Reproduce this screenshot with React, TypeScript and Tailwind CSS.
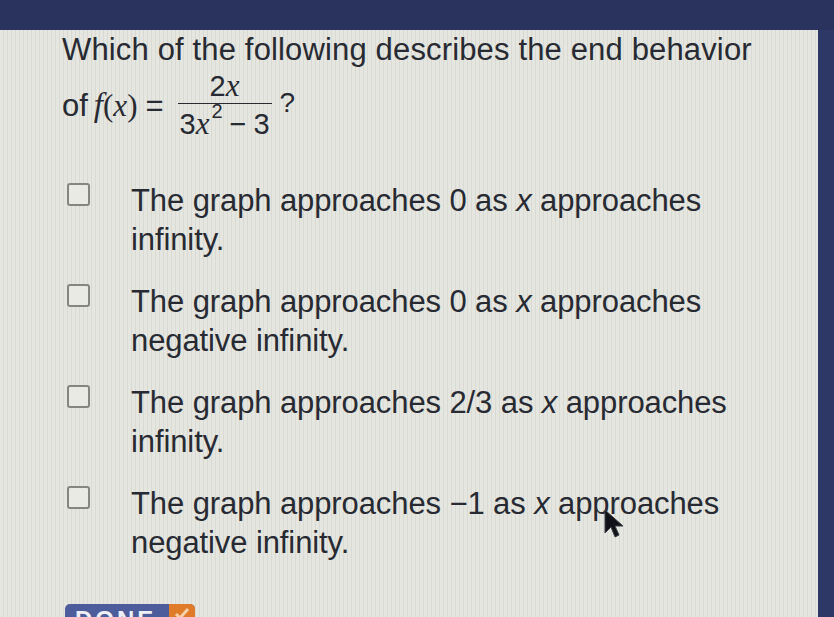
import React from 'react'

const options = [
  ['The graph approaches 0 as ', 'x', ' approaches', 'infinity.'],
  ['The graph approaches 0 as ', 'x', ' approaches', 'negative infinity.'],
  ['The graph approaches 2/3 as ', 'x', ' approaches', 'infinity.'],
  ['The graph approaches \u22121 as ', 'x', ' approaches', 'negative infinity.'],
]

function Checkbox() {
  return (
    <div className="mt-[2px] h-[23px] w-[23px] shrink-0 rounded-[3px] border-2 border-[#85867f] bg-[#e9eae4]" />
  )
}

function Cursor() {
  return (
    <svg
      className="absolute left-[603px] top-[509px]"
      width="22"
      height="30"
      viewBox="0 0 22 30"
    >
      <path d="M2 1 L2 24 L8 18 L12 28 L16 26 L12 17 L20 17 Z" fill="#121318" stroke="#3a3d48" strokeWidth="1" />
    </svg>
  )
}

export default function App() {
  return (
    <div className="relative flex h-[617px] w-[834px] flex-col overflow-hidden bg-[#2a3460] font-['Liberation_Sans',Arial,sans-serif] text-[#272a32]">
      <div className="h-[30px] shrink-0 bg-[#29335e]" />
      <div className="flex flex-1">
        <div className="flex-1 bg-[#e3e4de] bg-[repeating-linear-gradient(90deg,#e5e6e0_0px,#e5e6e0_3px,#d9dad3_3px,#d9dad3_4px)] pl-[62px]">
          <p className="text-[31px] leading-[39px] tracking-[0.15px]">
            Which of the following describes the end behavior
          </p>
          <div className="flex items-center text-[31px] leading-[39px]">
            <span>of</span>
            <span className="ml-[6px] font-['Liberation_Serif',serif] text-[33px] italic">f</span>
            <span className="font-['Liberation_Serif',serif] text-[31px]">(</span>
            <span className="font-['Liberation_Serif',serif] text-[31px] italic">x</span>
            <span className="font-['Liberation_Serif',serif] text-[31px]">)</span>
            <span className="ml-[8px]">=</span>
            <div className="ml-[14px] flex flex-col items-center text-[29px] leading-[34px]">
              <div className="px-[2px]">
                2<span className="font-['Liberation_Serif',serif] text-[31px] italic">x</span>
              </div>
              <div className="w-[94px] border-t-[1.5px] border-[#272a32]" />
              <div className="flex items-start pt-[3px]">
                3<span className="font-['Liberation_Serif',serif] text-[31px] italic">x</span>
                <span className="-mt-[7px] ml-[2px] text-[20px] leading-[22px]">2</span>
                <span className="ml-[7px]">{'\u2212'}</span>
                <span className="ml-[7px]">3</span>
              </div>
            </div>
            <span className="-mt-[6px] ml-[8px] text-[28px]">?</span>
          </div>

          <div className="mt-[40px] flex flex-col gap-[23px]">
            {options.map((o, i) => (
              <div key={i} className="flex items-start">
                <div className="ml-[5px]">
                  <Checkbox />
                </div>
                <div className="ml-[41px] text-[31px] leading-[39px] tracking-[-0.1px]">
                  <div>
                    {o[0]}
                    <span className="italic">{o[1]}</span>
                    {o[2]}
                  </div>
                  <div>{o[3]}</div>
                </div>
              </div>
            ))}
          </div>

          <div className="mt-[42px] ml-[3px] flex h-[40px] w-[130px] items-start overflow-hidden rounded-t-[5px] bg-[#4d5c9a]">
            <span className="pl-[10px] pt-[3px] text-[24px] font-bold leading-[26px] tracking-[3px] text-[#eef0f6]">
              DONE
            </span>
            <div className="ml-auto flex h-full w-[26px] items-start justify-center bg-[#e07b2a] pt-[3px]">
              <svg width="16" height="14" viewBox="0 0 16 14">
                <path d="M2 7 L6 11 L14 2" fill="none" stroke="#f6d0a8" strokeWidth="3" />
              </svg>
            </div>
          </div>
        </div>
        <div className="w-[16px] shrink-0 bg-[#2d3867]" />
      </div>
      <Cursor />
    </div>
  )
}
